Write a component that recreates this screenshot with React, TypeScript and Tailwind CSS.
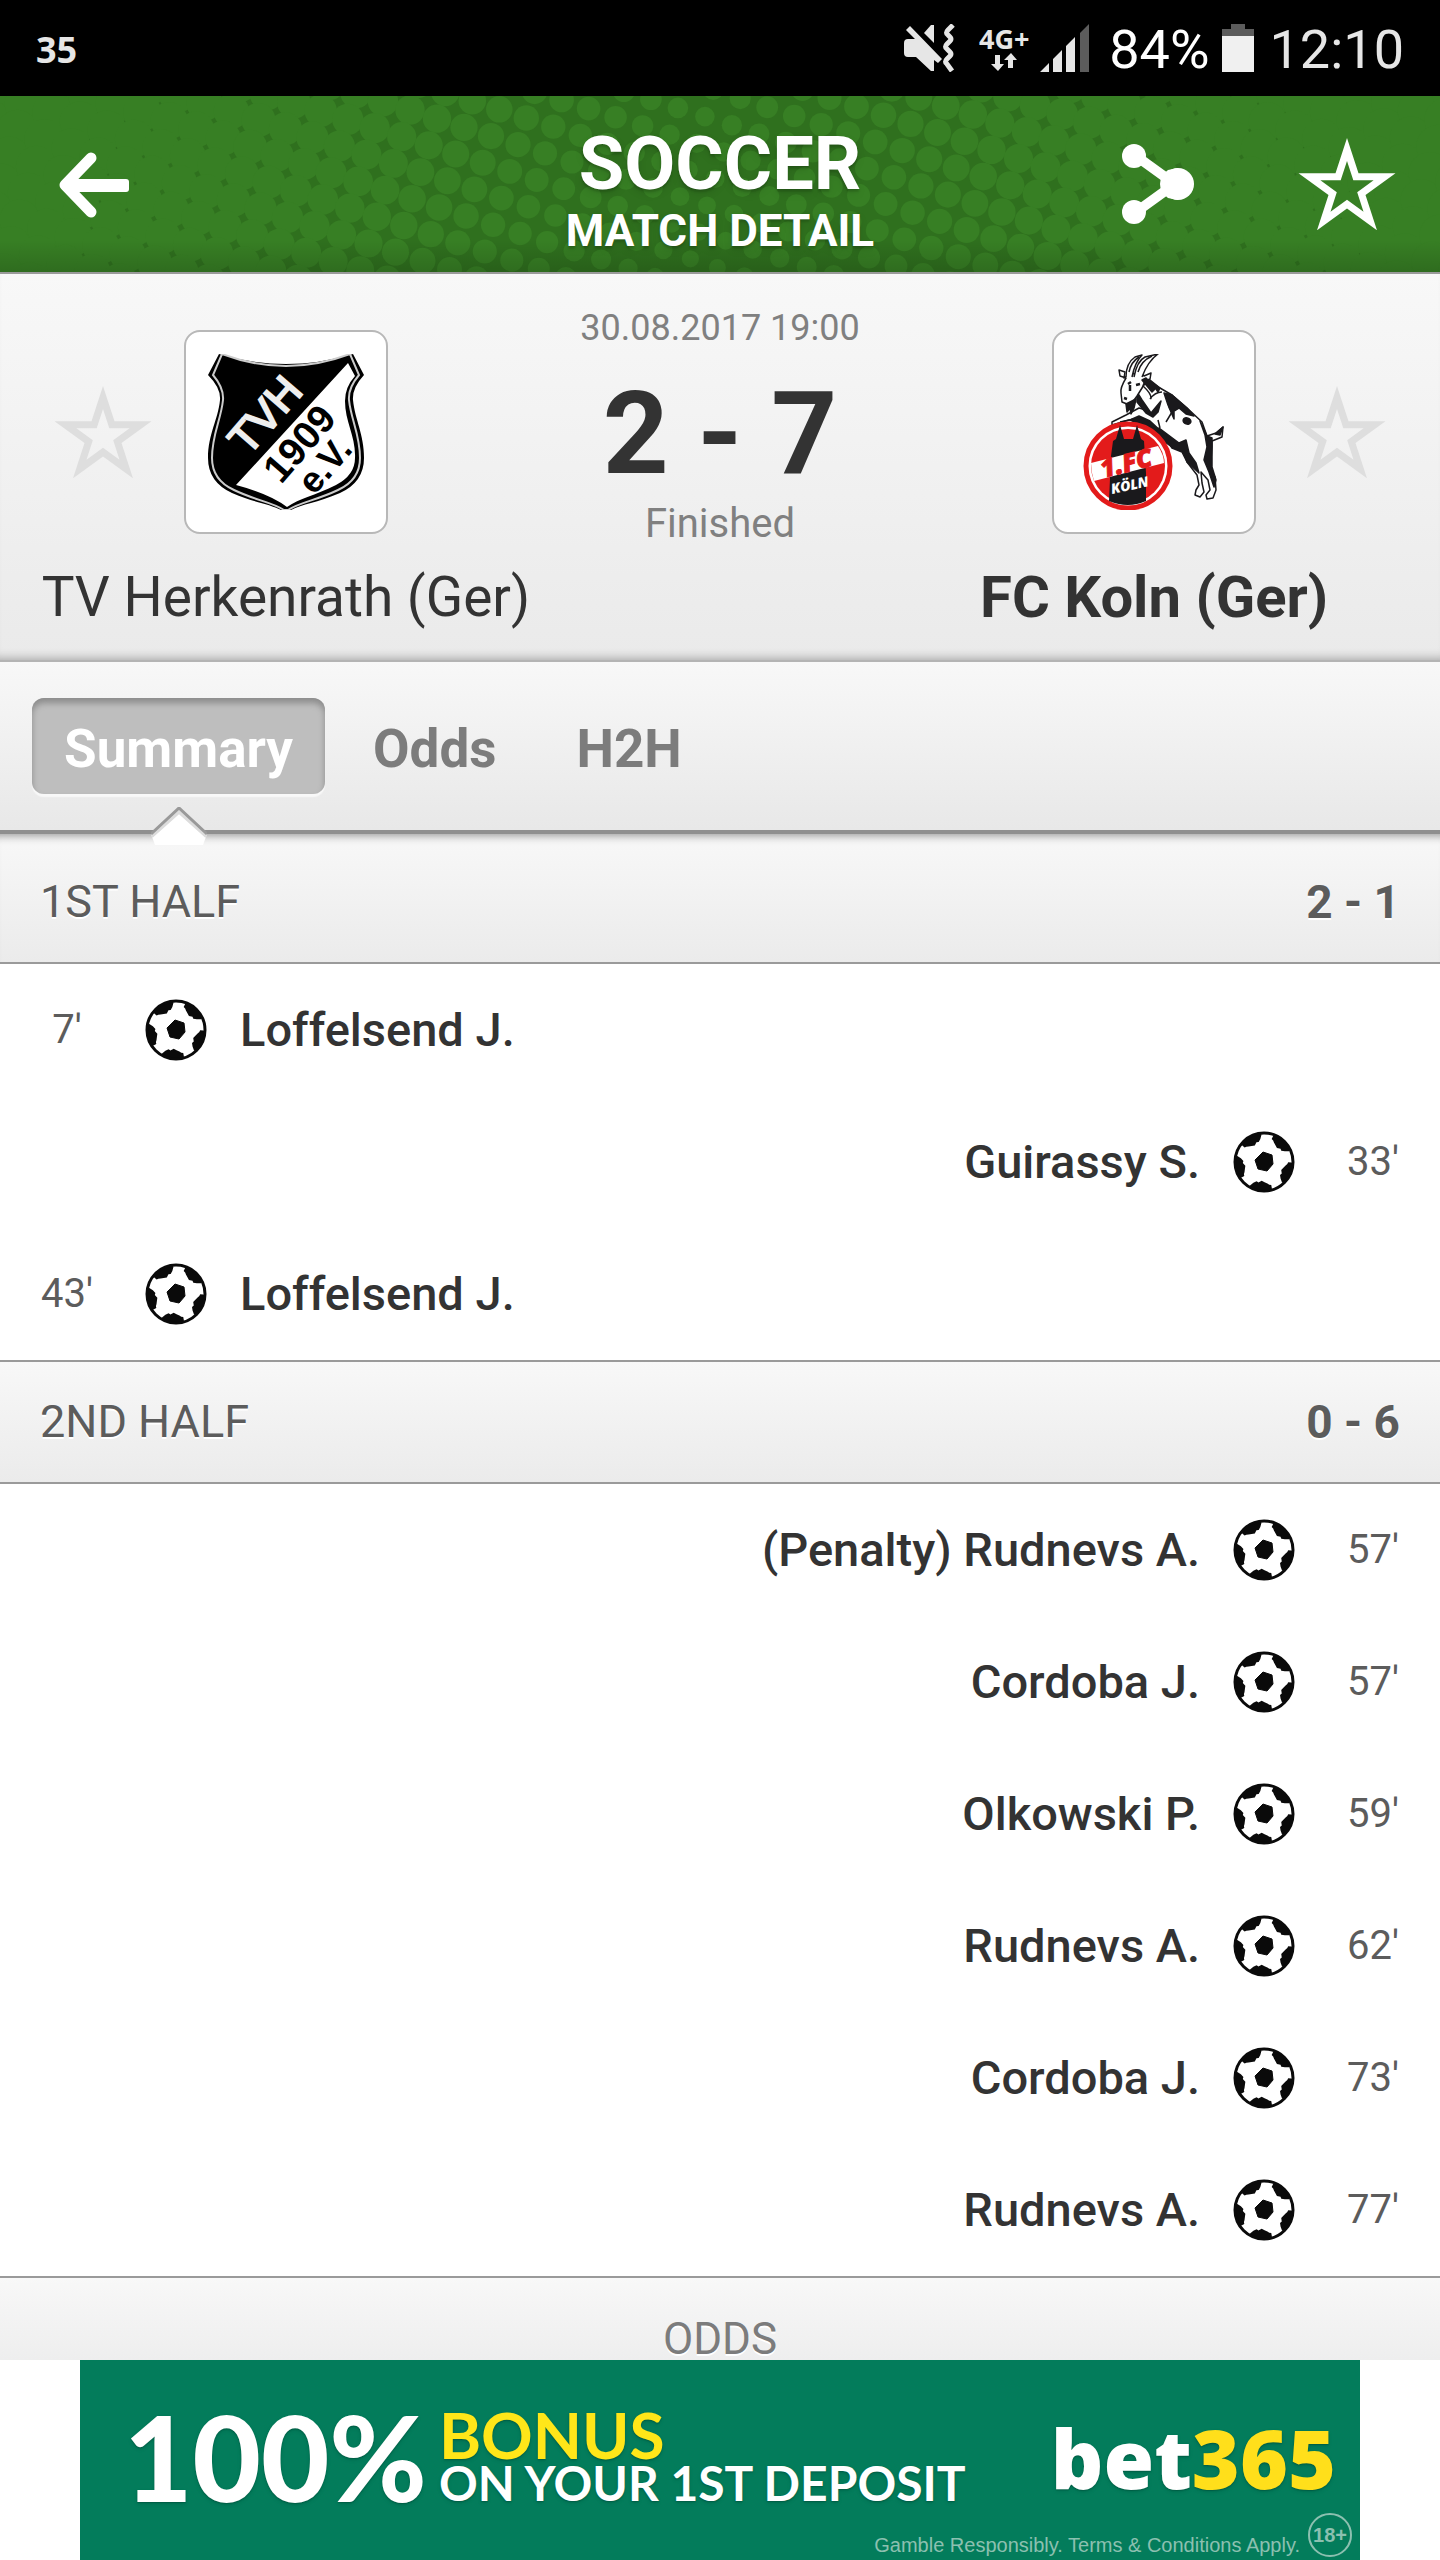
import React from "react";

const dots: { x: number; y: number; r: number }[] = [];
for (let i = -30; i < 50; i++) {
  for (let j = -30; j < 30; j++) {
    const x = 410 + i * 27 - j * 8.3;
    const y = 14 + i * 8.67 + j * 26.7;
    if (x < -20 || x > 1460 || y < -20 || y > 196) continue;
    dots.push({ x, y, r: 9 + Math.abs(x - 705) * 0.0165 + (100 - y) * 0.01 });
  }
}

function DotPattern() {
  return (
    <svg className="absolute inset-0 h-full w-full" viewBox="0 0 1440 176" preserveAspectRatio="xMidYMid slice" aria-hidden="true">
      <rect width="1440" height="176" fill="#2f701e" />
      <rect width="80" height="176" fill="#377f24" />
      <rect x="1360" width="80" height="176" fill="#377f24" />
      {dots.map((d, i) => (
        <circle key={i} cx={d.x} cy={d.y} r={d.r} fill="#377f24" />
      ))}
    </svg>
  );
}

function StatusBar() {
  return (
    <div className="flex h-24 items-center justify-between bg-black pr-9 pl-9 text-[#e6e6e6]">
      <span className="pt-1 font-['Open_Sans'] text-4xl font-bold">35</span>
      <div className="flex items-center">
        <svg className="h-12 w-[52px]" viewBox="0 0 52 48" fill="#e6e6e6" aria-label="Vibrate">
          <path d="M0 19q0-4 4-4h7L2 6l4-4 32 33-4 4-4-3v11h-3L12 33H4q-4 0-4-4z" />
          <path d="M20 9l7-8h3v18z" />
          <path d="M49 1l-5 5q-3 3 0 5l2 2q2 2 0 4l-3 3q-3 3 0 5l3 3q2 2 0 4l-3 3q-3 3 0 5l5 7" fill="none" stroke="#e6e6e6" strokeWidth="5" />
        </svg>
        <div className="ml-6 flex w-12 flex-col items-center">
          <span className="font-['Open_Sans'] text-[27px] leading-7 font-bold">4G+</span>
          <svg className="h-[18px] w-7" viewBox="0 0 28 18" fill="#e6e6e6" aria-hidden="true">
            <path d="M5 2h5v9h4l-6 7-7-7h4zM18 15V7h-4l7-7 6 7h-4v8z" />
          </svg>
        </div>
        <svg className="ml-3 h-12 w-[49px]" viewBox="0 0 49 48" fill="#e6e6e6" aria-label="Signal">
          <path d="M0 48l9-9v9zM13 48V35l9-9v22zM26 48V22l9-9v35z" />
          <path d="M40 48V9l9-9v48z" fill="#5c5c5c" />
        </svg>
        <span className="ml-5 pt-1 font-['Roboto'] text-[54px] leading-none text-white">84%</span>
        <svg className="ml-3 h-12 w-8" viewBox="0 0 32 48" aria-label="Battery">
          <path d="M0 5h9V0h14v5h9v43H0z" fill="#5c5c5c" />
          <path d="M0 12h32v36H0z" fill="#f0f0f0" />
        </svg>
        <span className="ml-4 pt-1 font-['Roboto'] text-[54px] leading-none">12:10</span>
      </div>
    </div>
  );
}

function starPath(radius: number) {
  const points: string[] = [];
  for (let i = 0; i < 10; i++) {
    const r = i % 2 ? radius * 0.382 : radius;
    const a = (i * Math.PI) / 5;
    points.push(`${(49 + r * Math.sin(a)).toFixed(1)} ${(51 - r * Math.cos(a)).toFixed(1)}`);
  }
  return `M${points.join("L")}Z`;
}

function Star({ color }: { color: string }) {
  return (
    <svg className="h-[92px] w-[98px]" viewBox="0 0 98 92" aria-hidden="true">
      <path d={starPath(51) + starPath(28)} fill={color} fillRule="evenodd" />
    </svg>
  );
}

function Header() {
  return (
    <header className="relative h-[178px] border-b-2 border-[#9a9a9a] bg-[#377f24]">
      <DotPattern />
      <div className="absolute inset-x-0 bottom-0 h-8 bg-linear-to-b from-transparent to-black/15" />
      <div className="relative grid h-full grid-cols-3 items-center text-white">
        <button aria-label="Back" className="ml-14 w-[76px]">
          <svg className="h-[70px] w-[76px]" viewBox="0 0 76 70" fill="none" stroke="white" aria-hidden="true">
            <path d="M35 9L9 36l26 27" strokeWidth="11" strokeLinecap="round" strokeLinejoin="round" />
            <rect x="12" y="30" width="61" height="13" rx="3" fill="white" stroke="none" />
          </svg>
        </button>
        <h1 className="flex flex-col items-center pt-4 text-center font-['Roboto'] font-bold whitespace-nowrap text-shadow-lg">
          <span className="text-[74px] leading-[78px]">SOCCER</span>
          <span className="text-[44px] leading-[56px]">MATCH DETAIL</span>
        </h1>
        <div className="flex items-center justify-end gap-[102px] pr-11">
          <button aria-label="Share">
            <svg className="h-20 w-[76px]" viewBox="0 0 76 80" fill="white" aria-hidden="true">
              <circle cx="14" cy="12" r="12" />
              <circle cx="14" cy="68" r="12" />
              <circle cx="58" cy="40" r="16" />
              <path d="M40 40q0-8 8-14l10-2v32l-10-2q-8-6-8-14z" />
              <path d="M16 12l36 26v4L16 68" fill="none" stroke="white" strokeWidth="10" />
            </svg>
          </button>
          <button aria-label="Add match to favourites">
            <Star color="white" />
          </button>
        </div>
      </div>
    </header>
  );
}

function HomeLogo() {
  return (
    <svg className="h-[156px] w-[156px]" viewBox="0 0 156 156" aria-label="TV Herkenrath">
      <path d="M11 0Q78 20 145 0L156 21Q144 34 145 46C147 66 156 80 156 104Q156 128 132 139C109 149 94 150 83 156H73C62 150 47 149 24 139Q0 128 0 104C0 80 10 66 12 46Q13 34 0 21Z" />
      <path d="M14 0Q78 24 142 0L151 21Q140 34 141 46C143 66 152 80 152 104Q152 126 130 136C107 147 92 148 80 156H76C64 148 49 147 26 136Q4 126 4 104C4 80 13 66 15 46Q16 34 5 21Z" stroke="#ccc" strokeWidth="2" />
      <path d="M140 9l7 13q-10 11-10 25C137 68 148 83 147 104Q147 121 128 131C106 142 92 144 79 153Q62 140 28 131z" fill="#fff" />
      <g fontFamily="Liberation Sans">
        <text transform="translate(40 103) rotate(-49)" fontSize="43" fill="#eee" stroke="#eee" strokeWidth="2">TVH</text>
        <text transform="translate(73 131) rotate(-49)" fontSize="39" fontWeight="bold">1909</text>
        <text transform="translate(106 142) rotate(-49)" fontSize="36" fontWeight="bold">e.V.</text>
      </g>
    </svg>
  );
}

function AwayLogo() {
  return (
    <svg className="h-[156px] w-[156px]" viewBox="0 0 156 156" aria-label="FC Koln">
      <g stroke="#1a191c" strokeWidth="1.500" strokeLinejoin="round">
        <path d="M72 26L84 34 96 41 111 54 126 68 131 82 140 79 147 73 146 83 136 87 136 93 135 106 134 116 139 123 140 136 137 144 131 145 130 141 134 136 132 126 125 118 126 129 128 138 124 143 119 141 120 136 123 131 121 121 111 108 108 98 96 93 83 76 76 71 66 64 53 66 36 71 36 68 50 61 63 54 70 56 63 46 60 41z" fill="#fff" />
        <path d="M74 26L84 34 82 38zM88 39L96 41 111 54 118 62 110 60 103 54 98 57 98 65 92 51zM83 74L103 89 110 86 113 99 120 109 123 119 111 108 106 98 96 94zM124 67L131 82 136 84 136 113 140 126 138 133 133 118 128 106 131 93 129 81zM139 80L147 73 144 81z" fill="#1a191c" />
        <ellipse cx="111" cy="67" rx="4" ry="3" fill="#1a191c" transform="rotate(20 111 67)" />
        <path d="M54 66L63 62 74 67 88 80 96 93 80 82 68 72z" fill="#1a191c" />
        <path d="M61 38L66 46 75 59 85 47 82 58 77 63 70 59 61 48z" fill="#1a191c" />
        <path d="M67 32q9 8 8 13M74 45q5-7 12-7M93 53l3 5-6 10M82 66l2 8M44 68l14-3" fill="none" />
        <path d="M50 24Q44 34 45 39L46 48 51 50 56 49 61 42 66 34 69 27 74 25 75 19 68 22 66 19 54 20 48 24 49 18 43 16 44 22z" fill="#fff" />
        <path d="M50 23Q50 9 59 3L66 1Q59 8 56 23M58 23Q61 7 69 3L82 0Q72 7 66 23" fill="#fff" />
        <path d="M53 18Q55 8 63 3M62 18Q65 7 76 2" fill="none" />
        <path d="M52 30l3-2M60 31l4-1M54 31v6M48 44l3 1" fill="none" strokeWidth="2.500" />
        <path d="M50 50L51 58 54 54 55 60 58 54 60 45zM70 24l10 10-4 4-10-12z" fill="#1a191c" />
      </g>
      <circle cx="52" cy="112" r="42" fill="#fff" stroke="#e31b1b" strokeWidth="5" />
      <circle cx="52" cy="112" r="37" fill="#e31b1b" />
      <path d="M35 102l2-15 3-2 4-14 4 14h9l4-14 4 14 3 2 2 32v28q-18 8-37 0z" fill="#1a191c" />
      <path d="M15 109l67-17q6 9 6 17l-70 18q-3-9-3-18z" fill="#fff" />
      <g fontFamily="Open Sans" fontWeight="800" fontStyle="italic">
        <text transform="translate(27 124) rotate(-14)" fontSize="25" fill="#e31b1b" stroke="#e31b1b" strokeWidth="1">1.FC</text>
        <text transform="translate(36 140) rotate(-12)" fontSize="14" fill="#fff">KÖLN</text>
      </g>
    </svg>
  );
}

function Team({ name, logo, home }: { name: string; logo: React.ReactNode; home?: boolean }) {
  return (
    <div className="flex flex-col items-center">
      <div className={home ? "flex items-center gap-8" : "flex flex-row-reverse items-center gap-8"}>
        <button aria-label={"Add " + name + " to favourites"}>
          <Star color="#dedede" />
        </button>
        <div className="flex size-[204px] items-center justify-center rounded-2xl border-2 border-[#b8b8b8] bg-white">{logo}</div>
        <div className="w-[98px]" />
      </div>
      <h2 className={home ? "mt-8 text-[55px] leading-[62px] whitespace-nowrap" : "mt-8 text-[58px] leading-[62px] font-bold whitespace-nowrap"}>{name}</h2>
    </div>
  );
}

function MatchPanel() {
  return (
    <section className="grid h-[388px] grid-cols-[27fr_14fr_27fr] border-b-2 border-[#b4b4b4] bg-linear-to-b from-[#f8f8f8] to-[#eaeaea] pt-14 text-[#333] inset-shadow-[0_-10px_10px_-8px_#aaaaaa]">
      <Team home name="TV Herkenrath (Ger)" logo={<HomeLogo />} />
      <div className="-mt-7 flex flex-col items-center whitespace-nowrap text-[#808080]">
        <time className="text-[36px] leading-[52px]">30.08.2017 19:00</time>
        <strong className="mt-6 text-[115px] leading-[112px] text-[#333]">2 - 7</strong>
        <span className="mt-2 text-[40px] leading-[52px]">Finished</span>
      </div>
      <Team name="FC Koln (Ger)" logo={<AwayLogo />} />
    </section>
  );
}

function Tabs() {
  return (
    <nav className="flex h-[172px] items-start border-b-4 border-[#8f8f8f] bg-linear-to-b from-[#f8f8f8] to-[#e8e8e8] px-8 pt-9 text-[53px] font-bold text-[#7c7c7c]">
      <button className="relative h-24 rounded-xl bg-[#bebebe] px-8 pt-2 text-white inset-shadow-[0_5px_6px_#8c8c8c] shadow-[0_3px_1px_#f8f8f8]">
        Summary
        <svg className="absolute top-[109px] left-1/2 h-[38px] w-14 -translate-x-1/2" viewBox="0 0 56 38" aria-hidden="true">
          <path d="M0 27L28 0l28 27-4 11H4z" fill="#fff" />
          <path d="M0 29L28 4l28 25" fill="none" stroke="#dcdcdc" strokeWidth="5" />
          <path d="M0 27L28 1l28 26" fill="none" stroke="#999" strokeWidth="3" />
        </svg>
      </button>
      <button className="ml-12 h-24 pt-2">Odds</button>
      <button className="ml-20 h-24 pt-2">H2H</button>
    </nav>
  );
}

const patches = [7, 79, 151, 223, 295];

function Ball() {
  return (
    <svg className="mx-[10px] size-16 shrink-0" viewBox="0 0 64 64" aria-label="Goal">
      <defs>
        <clipPath id="ball">
          <circle cx="32" cy="32" r="29" />
        </clipPath>
      </defs>
      <circle cx="32" cy="32" r="29" fill="#fff" />
      <path d="M31 22l9 3 1 9-6 7-9-2-3-9z" fill="#0a0a0a" stroke="#0a0a0a" strokeLinejoin="round" />
      <g clipPath="url(#ball)">
        {patches.map((a) => (
          <path key={a} d="M24 54l3-2 2 1 3-2 3 1 3 1 2 1h2l1 3v7H22l-1-7z" fill="#0a0a0a" transform={`rotate(${a} 32 32)`} />
        ))}
      </g>
      <circle cx="32" cy="32" r="29" fill="none" stroke="#0a0a0a" strokeWidth="3" />
    </svg>
  );
}

type Goal = { minute: string; player: string; home?: boolean };

function HalfSection({ title, score, goals, first }: { title: string; score: string; goals: Goal[]; first?: boolean }) {
  return (
    <section>
      <div
        className={
          "flex items-center justify-between border-[#9a9a9a] bg-linear-to-b from-[#f8f8f8] to-[#ebebeb] px-10 text-[#5c5c5c] text-shadow-[0_2px_0_#ffffff] " +
          (first ? "h-[130px] border-b-2 pt-2 inset-shadow-[0_10px_8px_-8px_#999999]" : "h-[124px] border-y-2")
        }
      >
        <h3 className="text-[45px]">{title}</h3>
        <span className="text-[46px] font-bold">{score}</span>
      </div>
      <ul>
        {goals.map((g) => (
          <li key={g.minute + g.player} className={g.home ? "flex h-[132px] items-center" : "flex h-[132px] flex-row-reverse items-center"}>
            <span className="w-[134px] text-center text-[40px] text-[#5c5c5c]">{g.minute}'</span>
            <Ball />
            <span className="mx-[22px] text-[47px] font-medium text-[#333]">{g.player}</span>
          </li>
        ))}
      </ul>
    </section>
  );
}

function Banner() {
  return (
    <a href="#bet365" className="mx-20 flex h-[200px] flex-col bg-[#037c5b] text-white">
      <div className="flex h-[150px] items-center justify-between pt-11 pr-6 pl-11 whitespace-nowrap text-shadow-md">
        <div className="flex items-center gap-3 font-['Lato']">
          <span className="text-[118px] leading-[100px] font-black">100%</span>
          <div className="flex flex-col font-bold">
            <span className="text-[64px] leading-[52px] text-[#ffe619]">BONUS</span>
            <span className="text-[48px] leading-[44px]">ON YOUR 1ST DEPOSIT</span>
          </div>
        </div>
        <span className="font-['Open_Sans'] text-[82px] leading-[80px] font-extrabold">
          bet<span className="text-[#ffdf1b]">365</span>
        </span>
      </div>
      <div className="flex items-center justify-end gap-2 pr-2 font-['Liberation_Sans'] text-[20px] whitespace-nowrap text-[#8cc0b0]">
        <small className="pt-5 text-[20px]">Gamble Responsibly. Terms &amp; Conditions Apply.</small>
        <span className="flex size-11 items-center justify-center rounded-full border-2 border-[#8cc0b0] font-bold">18+</span>
      </div>
    </a>
  );
}

export default function App() {
  return (
    <main className="min-h-screen bg-white font-['Roboto']">
      <StatusBar />
      <Header />
      <MatchPanel />
      <Tabs />
      <HalfSection
        first
        title="1ST HALF"
        score="2 - 1"
        goals={[
          { minute: "7", player: "Loffelsend J.", home: true },
          { minute: "33", player: "Guirassy S." },
          { minute: "43", player: "Loffelsend J.", home: true },
        ]}
      />
      <HalfSection
        title="2ND HALF"
        score="0 - 6"
        goals={[
          { minute: "57", player: "(Penalty) Rudnevs A." },
          { minute: "57", player: "Cordoba J." },
          { minute: "59", player: "Olkowski P." },
          { minute: "62", player: "Rudnevs A." },
          { minute: "73", player: "Cordoba J." },
          { minute: "77", player: "Rudnevs A." },
        ]}
      />
      <div className="flex h-[84px] items-end justify-center border-t-2 border-[#9a9a9a] bg-linear-to-b from-[#f8f8f8] to-[#eeeeee]">
        <h3 className="text-[44px] leading-[42px] text-[#7c7c7c] text-shadow-[0_2px_0_#ffffff]">ODDS</h3>
      </div>
      <Banner />
    </main>
  );
}
